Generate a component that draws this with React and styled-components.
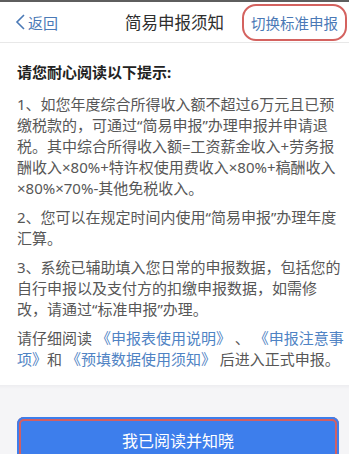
import React from 'react';
import styled, { createGlobalStyle } from 'styled-components';

const GlobalStyle = createGlobalStyle`
  *, *::before, *::after {
    box-sizing: border-box;
  }
  body {
    margin: 0;
    background: #fff;
    font-family: "Noto Sans", "Noto Sans CJK SC", sans-serif;
  }
`;

const Page = styled.div`
  display: flex;
  flex-direction: column;
  height: 454px;
  overflow: hidden;
  background: #fff;
`;

const TopLine = styled.div`
  flex: none;
  height: 2px;
  background: #5e5e5e;
`;

const Header = styled.header`
  flex: none;
  display: grid;
  grid-template-columns: 1fr auto 1fr;
  align-items: center;
  height: 41px;
  border-bottom: 1px solid #e8e8e8;
`;

const BackLink = styled.a`
  display: flex;
  align-items: center;
  gap: 2px;
  padding-left: 15px;
  font-size: 15px;
  color: #4a79b6;
  text-decoration: none;
`;

const Title = styled.h1`
  margin: 0;
  font-size: 16.5px;
  font-weight: 400;
  color: #2e2e2e;
`;

const SwitchButton = styled.button`
  justify-self: end;
  margin-right: 2px;
  height: 37px;
  padding: 0 7px;
  border: 2px solid #d4625f;
  border-radius: 14px;
  background: transparent;
  font-family: inherit;
  font-size: 14.5px;
  color: #4a79b6;
`;

const Content = styled.main`
  flex: 1;
  min-height: 0;
  overflow: hidden;
  padding: 19px 4px 0 17px;
  color: #575757;
  font-size: 15px;
  line-height: 21px;
`;

const Lead = styled.h2`
  margin: 0 0 12px;
  font-size: 15px;
  line-height: 20px;
  font-weight: 700;
  color: #222;
`;

const Paragraph = styled.p`
  margin: 0 0 8px;
`;

const DocLink = styled.a`
  color: #4f83c4;
  text-decoration: none;
`;

const Footer = styled.footer`
  flex: none;
  height: 69px;
  padding-top: 32px;
  background: linear-gradient(#ededf0, #f5f5f7 4px);
`;

const ConfirmButton = styled.button`
  display: block;
  width: 322px;
  height: 46px;
  margin-left: 17px;
  border: none;
  border-radius: 7px;
  background: #3d7eec;
  box-shadow: inset 0 0 0 2px #3d7eec, inset 0 0 0 4px #d25f63;
  color: #fff;
  font-family: inherit;
  font-size: 16px;
`;

function ChevronLeft() {
  return (
    <svg width="11" height="18" viewBox="0 0 11 18" fill="none">
      <path d="M9 2 L2 9 L9 16" stroke="#4a79b6" strokeWidth="1.6" />
    </svg>
  );
}

export default function App() {
  return (
    <>
      <GlobalStyle />
      <Page>
        <TopLine />
        <Header>
          <BackLink href="#">
            <ChevronLeft />
            返回
          </BackLink>
          <Title>简易申报须知</Title>
          <SwitchButton>切换标准申报</SwitchButton>
        </Header>
        <Content>
          <Lead>请您耐心阅读以下提示:</Lead>
          <Paragraph>
            1、如您年度综合所得收入额不超过6万元且已预缴税款的，可通过“简易申报”办理申报并申请退税。其中综合所得收入额=工资薪金收入+劳务报酬收入×80%+特许权使用费收入×80%+稿酬收入×80%×70%-其他免税收入。
          </Paragraph>
          <Paragraph>2、您可以在规定时间内使用“简易申报”办理年度汇算。</Paragraph>
          <Paragraph>
            3、系统已辅助填入您日常的申报数据，包括您的自行申报以及支付方的扣缴申报数据，如需修改，请通过“标准申报”办理。
          </Paragraph>
          <Paragraph>
            请仔细阅读 <DocLink href="#">《申报表使用说明》</DocLink> 、 <DocLink href="#">《申报注意事项》</DocLink>和 <DocLink href="#">《预填数据使用须知》</DocLink> 后进入正式申报。
          </Paragraph>
        </Content>
        <Footer>
          <ConfirmButton>我已阅读并知晓</ConfirmButton>
        </Footer>
      </Page>
    </>
  );
}
